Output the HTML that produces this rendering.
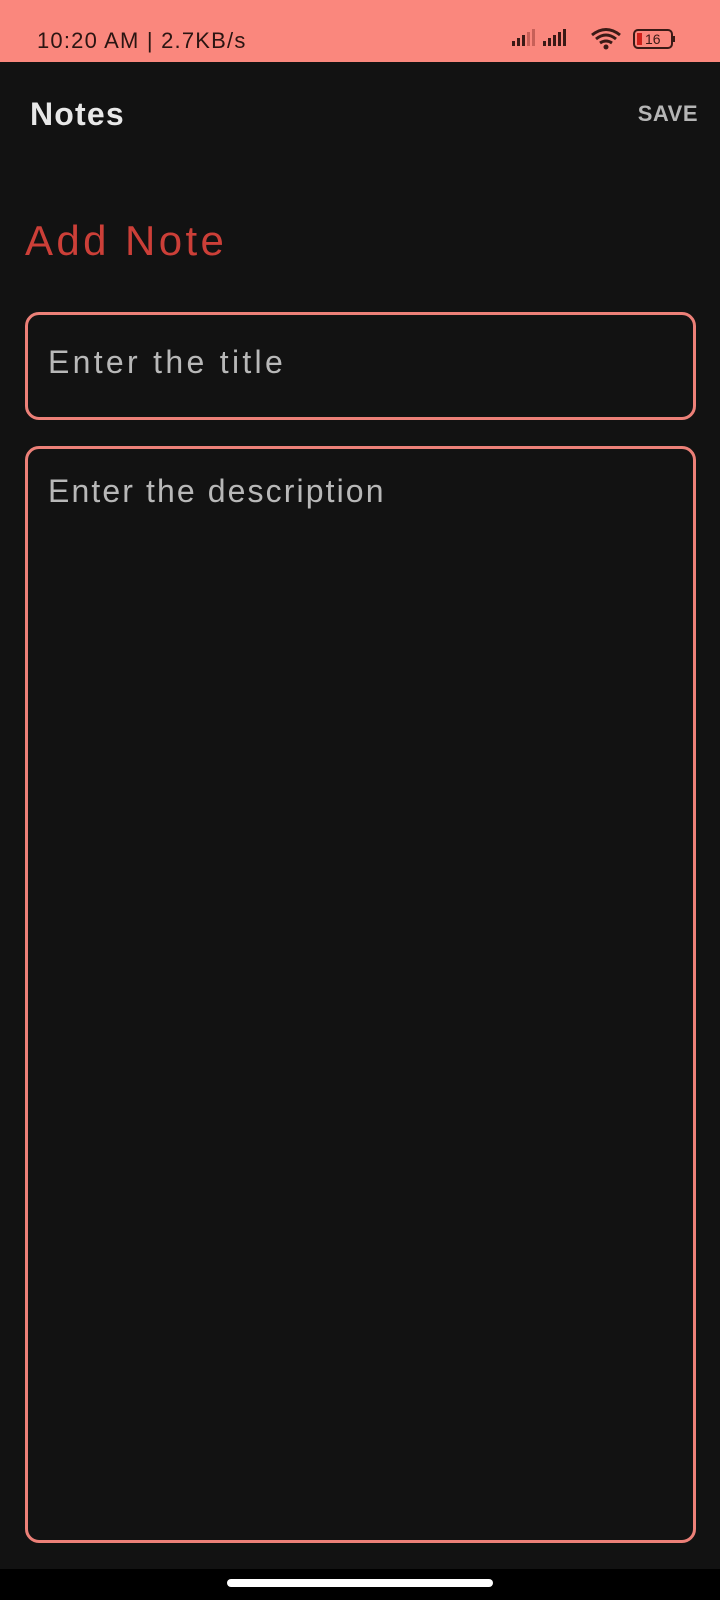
<!DOCTYPE html>
<html><head><meta charset="utf-8"><style>
*{margin:0;padding:0;box-sizing:border-box}
body{width:720px;height:1600px;background:#121212;position:relative;overflow:hidden;font-family:"Liberation Sans",sans-serif}
.sb{position:absolute;left:0;top:0;width:720px;height:62px;background:#fa877d}
.time{position:absolute;left:37px;top:28px;font-size:22px;color:#2a1512;letter-spacing:1.2px}
.notes{position:absolute;left:30px;top:96px;font-size:32px;color:#e8e8e8;font-weight:bold;letter-spacing:1.2px}
.save{position:absolute;right:22px;top:101px;font-size:22px;color:#b5b5b5;letter-spacing:.5px;font-weight:bold}
.add{position:absolute;left:25px;top:217px;font-size:42px;color:#cc3f38;letter-spacing:3.4px}
.box{position:absolute;left:25px;width:671px;border:3px solid #ec8078;border-radius:14px}
.ph{position:absolute;left:20px;font-size:32px;color:#b8b8b8;letter-spacing:2.1px}
.nav{position:absolute;left:0;top:1569px;width:720px;height:31px;background:#000}
.pill{position:absolute;left:227px;top:10px;width:266px;height:8px;border-radius:4px;background:#fff}
</style></head><body>
<div class="sb">
<div class="time">10:20 AM | 2.7KB/s</div>
<svg style="position:absolute;left:510px;top:26px" width="175" height="26" viewBox="0 0 175 26">
<g fill="#3a1a16"><rect x="2" y="15" width="3" height="5"/><rect x="7" y="12" width="3" height="8"/><rect x="12" y="9" width="3" height="11"/></g>
<g fill="#c76058"><rect x="17" y="6" width="3" height="14"/><rect x="22" y="3" width="3" height="17"/></g>
<g fill="#3a1a16"><rect x="33" y="15" width="3" height="5"/><rect x="38" y="12" width="3" height="8"/><rect x="43" y="9" width="3" height="11"/><rect x="48" y="6" width="3" height="14"/><rect x="53" y="3" width="3" height="17"/></g>
<g fill="none" stroke="#3a1a16" stroke-width="3"><path d="M82 9 Q96 -2 110 9"/><path d="M86 13 Q96 5 106 13"/><path d="M90 17 Q96 13 102 17"/></g>
<circle cx="96" cy="21" r="2.5" fill="#3a1a16"/>
<rect x="124" y="4" width="38" height="18" rx="4" fill="none" stroke="#3a1a16" stroke-width="2"/>
<rect x="127" y="7" width="5" height="12" fill="#d0201a"/>
<rect x="163" y="10" width="2" height="6" fill="#3a1a16"/>
<text x="135" y="18" font-size="14" fill="#3a1a16" font-family="Liberation Sans">16</text>
</svg>
</div>
<div class="notes">Notes</div>
<div class="save">SAVE</div>
<div class="add">Add Note</div>
<div class="box" style="top:312px;height:108px"><div class="ph" style="top:29px;letter-spacing:3.3px">Enter the title</div></div>
<div class="box" style="top:446px;height:1097px"><div class="ph" style="top:24px">Enter the description</div></div>
<div class="nav"><div class="pill"></div></div>
</body></html>
